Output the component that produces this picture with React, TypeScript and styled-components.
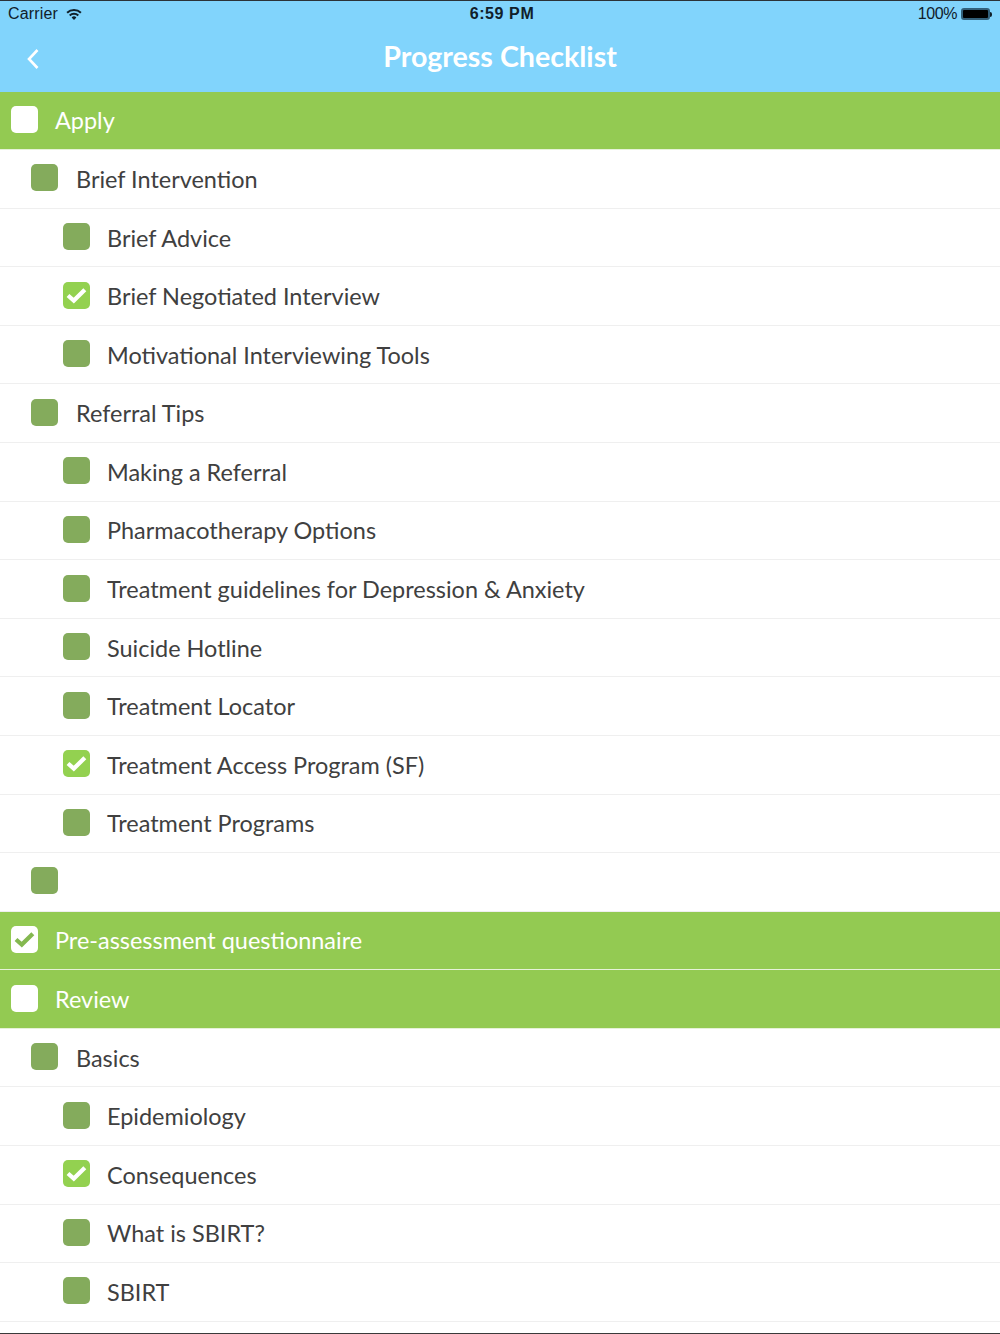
import React from "react";
import styled, { createGlobalStyle } from "styled-components";

const GlobalStyle = createGlobalStyle`
  html, body {
    margin: 0;
    padding: 0;
    background: #fff;
    font-family: "Lato", "Open Sans", sans-serif;
  }
`;

type Item = { label: string; level: 0 | 1 | 2; checked?: boolean };

const items: Item[] = [
  { label: "Apply", level: 0 },
  { label: "Brief Intervention", level: 1 },
  { label: "Brief Advice", level: 2 },
  { label: "Brief Negotiated Interview", level: 2, checked: true },
  { label: "Motivational Interviewing Tools", level: 2 },
  { label: "Referral Tips", level: 1 },
  { label: "Making a Referral", level: 2 },
  { label: "Pharmacotherapy Options", level: 2 },
  { label: "Treatment guidelines for Depression & Anxiety", level: 2 },
  { label: "Suicide Hotline", level: 2 },
  { label: "Treatment Locator", level: 2 },
  { label: "Treatment Access Program (SF)", level: 2, checked: true },
  { label: "Treatment Programs", level: 2 },
  { label: "", level: 1 },
  { label: "Pre-assessment questionnaire", level: 0, checked: true },
  { label: "Review", level: 0 },
  { label: "Basics", level: 1 },
  { label: "Epidemiology", level: 2 },
  { label: "Consequences", level: 2, checked: true },
  { label: "What is SBIRT?", level: 2 },
  { label: "SBIRT", level: 2 },
];

function Check({ color }: { color: string }) {
  return (
    <svg width="21" height="17" viewBox="0 0 21 17">
      <path d="M2 8.5 L7.8 13.6 L18.8 2.8" fill="none" stroke={color} strokeWidth="4.2" />
    </svg>
  );
}

function Wifi() {
  return (
    <svg width="16" height="12" viewBox="0 0 16 12">
      <path d="M0.4 4 A11 11 0 0 1 15.6 4 L14.2 5.5 A9 9 0 0 0 1.8 5.5 Z" fill="#10202a" />
      <path d="M3 6.7 A7.3 7.3 0 0 1 13 6.7 L11.6 8.2 A5.2 5.2 0 0 0 4.4 8.2 Z" fill="#10202a" />
      <path d="M5.6 9.4 A3.6 3.6 0 0 1 10.4 9.4 L8 12 Z" fill="#10202a" />
    </svg>
  );
}

function Battery() {
  return (
    <BatteryWrap>
      <BatteryBody />
      <BatteryTip />
    </BatteryWrap>
  );
}

export default function App() {
  return (
    <>
      <GlobalStyle />
      <Page>
        <Header>
          <StatusBar>
            <StatusLeft>
              <span>Carrier</span>
              <Wifi />
            </StatusLeft>
            <Time>6:59 PM</Time>
            <StatusRight>
              <span>100%</span>
              <Battery />
            </StatusRight>
          </StatusBar>
          <NavBar>
            <BackButton>
              <svg width="14" height="22" viewBox="0 0 14 22">
                <path d="M11.5 2 L3 11 L11.5 20" fill="none" stroke="#fff" strokeWidth="2.6" />
              </svg>
            </BackButton>
            <Title>Progress Checklist</Title>
          </NavBar>
        </Header>
        <List>
          {items.map((item, i) => (
            <Row key={i} $level={item.level}>
              <Box $level={item.level} $checked={!!item.checked}>
                {item.checked && <Check color={item.level === 0 ? "#84b850" : "#fff"} />}
              </Box>
              <Label $level={item.level}>{item.label}</Label>
            </Row>
          ))}
        </List>
      </Page>
    </>
  );
}

const Page = styled.div`
  width: 1000px;
  height: 1334px;
  overflow: hidden;
  background: #fff;
  border-top: 1px solid #2b3238;
  border-bottom: 1px solid #3a3a3a;
  box-sizing: border-box;
`;

const Header = styled.header`
  height: 90.6px;
  background: #81d4fc;
  display: flex;
  flex-direction: column;
`;

const StatusBar = styled.div`
  height: 26px;
  padding: 0 8px;
  display: grid;
  grid-template-columns: 1fr auto 1fr;
  align-items: center;
  font-family: "Liberation Sans", sans-serif;
  font-size: 16px;
  color: #10202a;
`;

const StatusLeft = styled.div`
  display: flex;
  align-items: center;
  gap: 8px;
  span {
    letter-spacing: 0.15px;
  }
`;

const Time = styled.div`
  font-weight: 700;
  font-size: 16px;
  letter-spacing: 0.6px;
  padding-left: 4px;
`;

const StatusRight = styled.div`
  display: flex;
  align-items: center;
  justify-content: flex-end;
  gap: 4px;
  span {
    letter-spacing: -0.4px;
  }
`;

const BatteryWrap = styled.div`
  display: flex;
  align-items: center;
`;

const BatteryBody = styled.div`
  width: 25px;
  height: 8px;
  background: #000;
  border: 2px solid #33607a;
  border-radius: 3px;
`;

const BatteryTip = styled.div`
  width: 2px;
  height: 5px;
  background: #10202a;
  border-radius: 0 2px 2px 0;
`;

const NavBar = styled.div`
  flex: 1;
  position: relative;
  display: flex;
  align-items: center;
  justify-content: center;
  padding-bottom: 7px;
`;

const BackButton = styled.div`
  position: absolute;
  left: 26px;
  top: 21px;
  line-height: 0;
`;

const Title = styled.h1`
  margin: 0;
  color: #fff;
  font-size: 28.6px;
  font-weight: 700;
`;

const List = styled.div`
  display: flex;
  flex-direction: column;
`;

const indent = { 0: 11, 1: 31.4, 2: 62.6 };
const labelGap = { 0: 17, 1: 17.6, 2: 17.4 };

const Row = styled.div<{ $level: number }>`
  height: 58.58px;
  box-sizing: border-box;
  flex: none;
  display: flex;
  align-items: center;
  padding-left: ${(p) => indent[p.$level as 0 | 1 | 2]}px;
  background: ${(p) => (p.$level === 0 ? "#93ca52" : "#fff")};
  border-bottom: 1.5px solid ${(p) => (p.$level === 0 ? "#e6f2d8" : "#efefef")};
`;

const Box = styled.div<{ $level: number; $checked: boolean }>`
  width: 27px;
  height: 27px;
  border-radius: 5px;
  margin-top: -2px;
  flex: none;
  display: flex;
  align-items: center;
  justify-content: center;
  background: ${(p) => (p.$level === 0 ? "#fff" : p.$checked ? "#93d150" : "#84ab5c")};
`;

const Label = styled.span<{ $level: number }>`
  margin-left: ${(p) => labelGap[p.$level as 0 | 1 | 2]}px;
  font-size: 23.46px;
  line-height: 30px;
  color: ${(p) => (p.$level === 0 ? "#fff" : "#404040")};
`;
